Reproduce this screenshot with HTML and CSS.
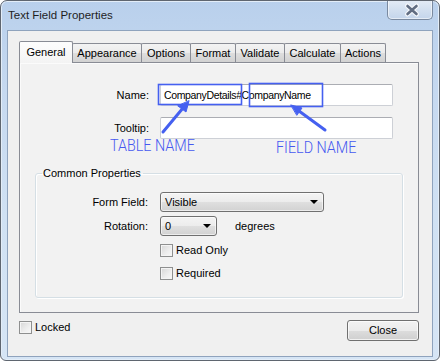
FILE: index.html
```html
<!DOCTYPE html>
<html lang="en">
<head>
    <meta charset="UTF-8">
    <title>Text Field Properties</title>
    <link rel="stylesheet" href="styles.css">
</head>
<body>
    <div class="window">
        <div class="titlebar">
            <span class="title">Text Field Properties</span>
            <div class="close-x">
                <svg width="46" height="19" viewBox="0 0 46 19">
                    <path d="M19.5 6 L28.5 14 M28.5 6 L19.5 14" stroke="#f4f7fb" stroke-width="5" stroke-linecap="round"/>
                    <path d="M19.5 6 L28.5 14 M28.5 6 L19.5 14" stroke="#616d82" stroke-width="2.6" stroke-linecap="round"/>
                </svg>
            </div>
        </div>

        <div class="client">
            <div class="tabs">
                <div class="tab active" style="width: 54px">General</div>
                <div class="tab" style="width: 70px">Appearance</div>
                <div class="tab" style="width: 50px">Options</div>
                <div class="tab" style="width: 46px">Format</div>
                <div class="tab" style="width: 50px">Validate</div>
                <div class="tab" style="width: 57px">Calculate</div>
                <div class="tab" style="width: 46px">Actions</div>
            </div>

            <div class="panel">
                <div class="field-row">
                    <span class="label">Name:</span>
                    <div class="textbox">CompanyDetails#CompanyName</div>
                </div>
                <div class="field-row second">
                    <span class="label">Tooltip:</span>
                    <div class="textbox"></div>
                </div>

                <fieldset class="group">
                    <legend>Common Properties</legend>
                    <div class="prop-row first">
                        <span class="prop-label">Form Field:</span>
                        <div class="combo wide"><span>Visible</span><i class="arrow"></i></div>
                    </div>
                    <div class="prop-row">
                        <span class="prop-label">Rotation:</span>
                        <div class="combo narrow"><span>0</span><i class="arrow"></i></div>
                        <span class="unit">degrees</span>
                    </div>
                    <div class="prop-row check-row">
                        <span class="prop-label"></span>
                        <span class="check"><span class="box"></span>Read Only</span>
                    </div>
                    <div class="prop-row check-row last">
                        <span class="prop-label"></span>
                        <span class="check"><span class="box"></span>Required</span>
                    </div>
                </fieldset>
            </div>

            <div class="footer">
                <span class="check locked"><span class="box"></span>Locked</span>
                <div class="button">Close</div>
            </div>
        </div>
    </div>

    <!-- annotations drawn over the dialog -->
    <svg class="marks" width="440" height="361" viewBox="0 0 440 361">
        <g fill="none" stroke="#4560f0" stroke-width="1.6">
            <rect x="158.5" y="84.5" width="83" height="20"/>
            <rect x="249.5" y="83.5" width="73" height="23"/>
        </g>
        <g stroke="#4560f0" stroke-width="3" stroke-linecap="round" fill="#4560f0">
            <line x1="163" y1="132" x2="183" y2="108"/>
            <polygon points="189,101 186,112 178,106" stroke-width="1" stroke-linejoin="round"/>
            <line x1="325" y1="130" x2="299" y2="111"/>
            <polygon points="291,105 302,108 297,115" stroke-width="1" stroke-linejoin="round"/>
        </g>
    </svg>
    <span class="note table-note">TABLE NAME</span>
    <span class="note field-note">FIELD NAME</span>
</body>
</html>
```

FILE: styles.css
```css
* {
    box-sizing: border-box;
}

body {
    margin: 0;
    position: relative;
    width: 440px;
    height: 361px;
    font-family: 'Liberation Sans', Arial, sans-serif;
    font-size: 11px;
    color: #000;
    background: #fff;
}

.window {
    width: 440px;
    height: 361px;
    border: 1px solid #5f6670;
    border-radius: 7px 7px 6px 6px;
    background: linear-gradient(180deg, #b9d0ec 0%, #c6d9f0 25%, #d0e1f3 60%, #d6e5f5 100%);
    box-shadow: inset 0 0 0 1px #e3edf8;
    overflow: hidden;
}

.titlebar {
    height: 29px;
    display: flex;
    justify-content: space-between;
}

.title {
    padding-left: 7px;
    line-height: 29px;
    font-size: 11.5px;
    color: #1e1e1e;
}

.close-x {
    width: 46px;
    height: 20px;
    margin-top: -1px;
    margin-right: 6px;
    border: 1px solid #7a8aa0;
    border-top: none;
    border-radius: 0 0 5px 5px;
    background: linear-gradient(180deg, #e4ecf6 0%, #d3e0f0 50%, #c4d5eb 100%);
    box-shadow: inset 0 0 0 1px rgba(255, 255, 255, 0.55);
}

.close-x svg {
    display: block;
}

.client {
    height: 327px;
    margin: 0 6px;
    padding: 10px 0 0 11px;
    border: 1px solid #8fa3bd;
    background: #f0f0f0;
}

.tabs {
    height: 21px;
    display: flex;
    align-items: flex-end;
}

.tab {
    height: 19px;
    margin-left: -1px;
    border: 1px solid #898c95;
    border-bottom: none;
    border-radius: 2px 2px 0 0;
    text-align: center;
    line-height: 18px;
    background: linear-gradient(180deg, #f3f3f3 0%, #ebebeb 50%, #dedede 50%, #d2d2d2 100%);
}

.tab.active {
    height: 22px;
    margin-left: 0;
    margin-bottom: -1px;
    position: relative;
    z-index: 1;
    line-height: 20px;
    background: linear-gradient(180deg, #fdfdfd 0%, #f7f7f7 70%, #f3f3f3 100%);
}

.panel {
    width: 400px;
    height: 251px;
    padding-top: 21px;
    border: 1px solid #898c95;
    background: #f2f2f2;
    box-shadow: inset 1px 1px 0 #fbfbfb;
}

.field-row {
    display: grid;
    grid-template-columns: 129px 233px;
    column-gap: 11px;
    align-items: center;
}

.field-row.second {
    margin-top: 11px;
}

.label {
    text-align: right;
}

.textbox {
    height: 22px;
    padding-left: 3px;
    line-height: 20px;
    font-size: 10.5px;
    letter-spacing: -0.35px;
    border: 1px solid #cdd0d6;
    border-top-color: #abadb3;
    border-radius: 2px;
    background: #fff;
}

.group {
    margin: 27px 15px 0 15px;
    padding: 0 0 17px 6px;
    border: 1px solid #d5dfe5;
    border-radius: 3px;
    box-shadow: 1px 1px 0 #fff, inset 1px 1px 0 #fff;
}

.group legend {
    padding: 0 2px 0 1px;
    line-height: 14px;
}

.prop-row {
    display: flex;
    align-items: center;
    margin-top: 4px;
}

.prop-row.first {
    margin-top: 12px;
}

.prop-label {
    width: 106px;
    margin-right: 12px;
    text-align: right;
}

.combo {
    height: 20px;
    padding: 0 5px 0 4px;
    display: flex;
    align-items: center;
    justify-content: space-between;
    border: 1px solid #707070;
    border-radius: 3px;
    background: linear-gradient(180deg, #f4f4f4 0%, #ececec 50%, #dfdfdf 50%, #d2d2d2 100%);
    box-shadow: inset 0 0 0 1px rgba(255, 255, 255, 0.6);
}

.combo.wide {
    width: 164px;
}

.combo.narrow {
    width: 57px;
}

.arrow {
    width: 0;
    height: 0;
    border-left: 4px solid transparent;
    border-right: 4px solid transparent;
    border-top: 4px solid #000;
}

.unit {
    margin-left: 18px;
}

.check-row {
    height: 13px;
    margin-top: 8px;
}

.check-row.last {
    margin-top: 10px;
}

.check {
    display: flex;
    align-items: center;
    gap: 3px;
    line-height: 13px;
}

.box {
    width: 13px;
    height: 13px;
    border: 1px solid #8e8f8f;
    background: linear-gradient(135deg, #d6d6d6 0%, #eeeeee 60%, #f8f8f8 100%);
    box-shadow: inset 0 0 0 1px #f4f4f4;
}

.footer {
    width: 400px;
    margin-top: 7px;
    display: flex;
    justify-content: space-between;
    align-items: flex-start;
}

.locked {
    margin-top: 1px;
}

.button {
    width: 72px;
    height: 21px;
    border: 1px solid #707070;
    border-radius: 3px;
    text-align: center;
    line-height: 19px;
    background: linear-gradient(180deg, #f2f2f2 0%, #ebebeb 50%, #dddddd 50%, #cfcfcf 100%);
    box-shadow: inset 0 0 0 1px rgba(255, 255, 255, 0.7);
}

.marks {
    position: absolute;
    top: 0;
    left: 0;
    pointer-events: none;
}

.note {
    position: absolute;
    font-family: Roboto, 'Liberation Sans', sans-serif;
    font-weight: 300;
    font-size: 16.5px;
    line-height: 16.5px;
    color: #4659f0;
    white-space: nowrap;
    transform: scaleX(0.87);
    transform-origin: left center;
}

.table-note {
    left: 110px;
    top: 138px;
}

.field-note {
    left: 276px;
    top: 140px;
}
```
